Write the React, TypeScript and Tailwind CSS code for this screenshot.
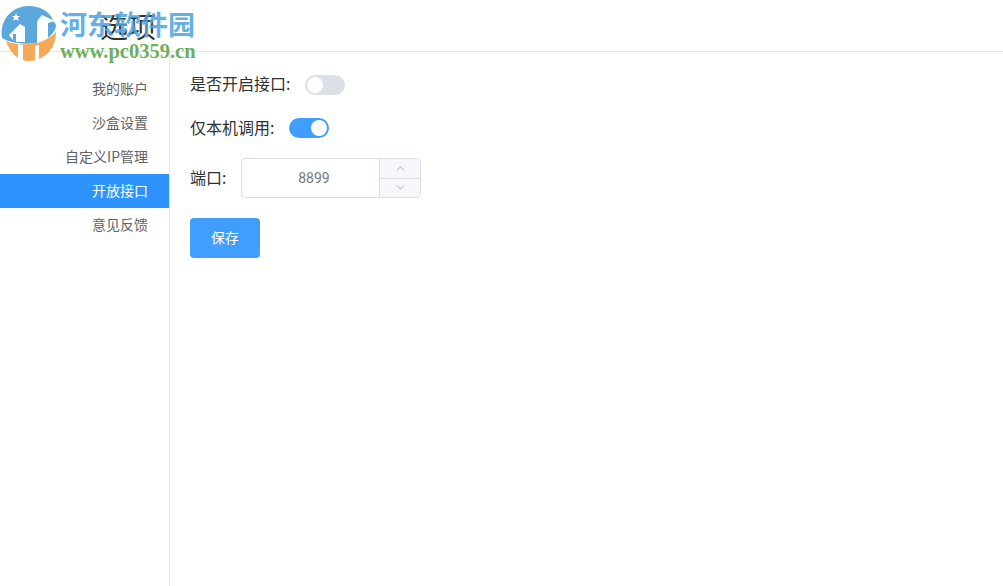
import { ChevronDown, ChevronUp } from "lucide-react";

const menu = ["我的账户", "沙盒设置", "自定义IP管理", "开放接口", "意见反馈"];

function Toggle({ on }: { on: boolean }) {
  return (
    <div className={`flex h-5 w-10 items-center rounded-full px-0.5 ${on ? "justify-end bg-[#409eff]" : "justify-start bg-[#dcdfe6]"}`}>
      <div className="h-4 w-4 rounded-full bg-white" />
    </div>
  );
}

function Watermark() {
  return (
    <div className="absolute left-0 top-0 flex h-[64px] w-[200px]">
      <svg width="58" height="64" viewBox="0 0 58 64" className="shrink-0">
        <path d="M6 41 C14 45 40 48 56 32 C56 50 43 61 29 61 C18 61 10 53 6 41 Z" fill="#f6a957" />
        <path d="M2 38 C-1 20 12 6 29 6 C40 6 48 11 52 18 L56 25 C56 31 50 38 40 42 C28 45 12 44 2 38 Z" fill="#5ba8dc" />
        <path d="M9 35 L20 24 L25 27 L25 42 L16 42 L16 34 L13 34 L13 40 Z" fill="#ffffff" />
        <path d="M37 21 L42 15 L55 21 L48 23 L48 38 C44 41 41 42 37 43 Z" fill="#ffffff" />
        <path d="M18 44 L23 45 L23 61 L18 58 Z" fill="#ffffff" />
        <path d="M35 46 L39 45 L39 60 L35 61 Z" fill="#ffffff" />
        <path d="M16 13 L17 16 L20 16 L17.8 18 L18.6 21 L16 19.3 L13.4 21 L14.2 18 L12 16 L15 16 Z" fill="#ffffff" />
      </svg>
      <div className="ml-[2px] flex flex-col">
        <div className="mt-[7px] whitespace-nowrap font-['Noto_Sans_CJK_SC',serif] text-[27px] font-bold leading-[34px] text-[#4fa5e2]/90">河东软件园</div>
        <div className="whitespace-nowrap font-['Liberation_Serif',serif] text-[20.5px] font-bold leading-[20px] text-[#6fae5c]">www.pc0359.cn</div>
      </div>
    </div>
  );
}

export default function App() {
  return (
    <div className="relative flex h-[586px] w-[1003px] flex-col overflow-hidden bg-white font-['Noto_Sans_CJK_SC',sans-serif] text-[16px]">
      <header className="flex h-[52px] shrink-0 items-center border-b border-[#e6e6e6] pl-[100px]">
        <h1 className="text-[28px] font-normal leading-none text-[#303133]">选项</h1>
      </header>
      <div className="flex min-h-0 flex-1">
        <aside className="w-[170px] shrink-0 border-r border-[#e6e6e6] pt-[20px]">
          {menu.map((item) => (
            <div
              key={item}
              className={`flex h-[34px] items-center justify-end pb-[2px] pr-[21px] text-[14px] ${item === "开放接口" ? "bg-[#2d94ff] text-white" : "text-[#606266]"}`}
            >
              {item}
            </div>
          ))}
        </aside>
        <main className="flex flex-col items-start pl-[20px] pt-[23px] text-[#303133]">
          <div className="flex h-5 items-center gap-[15px]">
            <span className="pb-[5px]">是否开启接口:</span>
            <Toggle on={false} />
          </div>
          <div className="mt-[23px] flex h-5 items-center gap-[15px]">
            <span className="pb-[3px]">仅本机调用:</span>
            <Toggle on />
          </div>
          <div className="mt-[20px] flex h-10 items-center gap-[15px]">
            <span className="pb-[3px]">端口:</span>
            <div className="flex h-10 w-[180px] overflow-hidden rounded border border-[#dcdfe6]">
              <div className="flex flex-1 items-center justify-center pl-[6px] font-['Roboto',sans-serif] text-[14px] text-[#75787e]">8899</div>
              <div className="flex w-[41px] flex-col border-l border-[#dcdfe6] bg-[#f5f7fa] text-[#606266]">
                <div className="flex flex-1 items-center justify-center border-b border-[#dcdfe6]">
                  <ChevronUp size={13} strokeWidth={1} />
                </div>
                <div className="flex flex-1 items-center justify-center">
                  <ChevronDown size={13} strokeWidth={1} />
                </div>
              </div>
            </div>
          </div>
          <button className="mt-[20px] h-10 w-[70px] rounded bg-[#409eff] pb-[2px] text-[14px] text-white">保存</button>
        </main>
      </div>
      <Watermark />
    </div>
  );
}
